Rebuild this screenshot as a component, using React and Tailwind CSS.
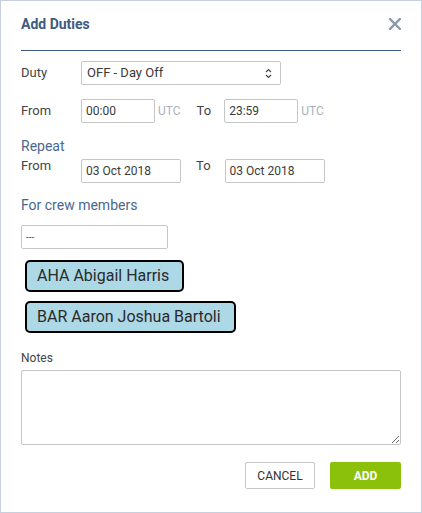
import React from 'react';

const font = { fontFamily: 'Roboto, "Noto Sans", sans-serif' };

const Label = ({ children, className = '' }) => (
  <span className={`text-[13px] text-[#444] ${className}`}>{children}</span>
);

const TextBox = ({ value, width }) => (
  <div className={`h-[24px] ${width} border border-[#c6c6c6] rounded-[2px] px-[4px] flex items-center text-[12px] text-[#3a3a3a]`}>
    {value}
  </div>
);

const Chip = ({ children }) => (
  <div className="self-start ml-[4px] h-[32px] pl-[10px] pr-[13px] flex items-center border-2 border-black rounded-[5px] bg-[#add8e6] text-[16px] text-[#2a2a2a]">
    {children}
  </div>
);

export default function App() {
  return (
    <div style={font} className="w-[422px] h-[513px] bg-white border border-[#c5d1df] px-[20px] flex flex-col">
      {/* header */}
      <div className="mt-[13px] h-[20px] flex items-center justify-between">
        <h1 className="text-[14px] font-bold text-[#3e5b80]">Add Duties</h1>
        <svg width="12" height="12" viewBox="0 0 12 12">
          <path d="M1 1L11 11M11 1L1 11" stroke="#8a99ab" strokeWidth="2.4" strokeLinecap="square" />
        </svg>
      </div>
      <div className="mt-[16px] border-t border-[#3e5b80]" />

      {/* duty */}
      <div className="mt-[10px] flex items-center">
        <Label className="w-[60px]">Duty</Label>
        <div className="h-[24px] w-[200px] border border-[#c6c6c6] rounded-[2px] pl-[5px] pr-[8px] flex items-center justify-between text-[13px] text-[#3a3a3a]">
          <span>OFF - Day Off</span>
          <svg width="7" height="11" viewBox="0 0 7 11">
            <path d="M1 4L3.5 1.5L6 4M1 7L3.5 9.5L6 7" fill="none" stroke="#444" strokeWidth="1.1" />
          </svg>
        </div>
      </div>

      {/* time */}
      <div className="mt-[14px] flex items-center">
        <Label className="w-[60px]">From</Label>
        <TextBox value="00:00" width="w-[74px]" />
        <span className="ml-[3px] text-[12px] text-[#aab0b8]">UTC</span>
        <Label className="ml-[16px]">To</Label>
        <div className="ml-[13px]">
          <TextBox value="23:59" width="w-[74px]" />
        </div>
        <span className="ml-[3px] text-[12px] text-[#aab0b8]">UTC</span>
      </div>

      {/* repeat */}
      <div className="mt-[13px] h-[20px] flex items-center text-[14px] text-[#4a6791]">Repeat</div>
      <div className="mt-[3px] flex items-center">
        <Label className="w-[60px] self-start -mt-[3px]">From</Label>
        <TextBox value="03 Oct 2018" width="w-[100px]" />
        <Label className="ml-[15px] self-start -mt-[3px]">To</Label>
        <div className="ml-[14px]">
          <TextBox value="03 Oct 2018" width="w-[100px]" />
        </div>
      </div>

      {/* crew */}
      <div className="mt-[12px] h-[20px] flex items-center text-[14px] text-[#4a6791]">For crew members</div>
      <div className="mt-[10px] h-[24px] w-[147px] border border-[#c6c6c6] rounded-[2px] px-[4px] flex items-center text-[10px] text-[#555]">
        ---
      </div>
      <div className="mt-[11px] flex flex-col gap-[9px]">
        <Chip>AHA Abigail Harris</Chip>
        <Chip>BAR Aaron Joshua Bartoli</Chip>
      </div>

      {/* notes */}
      <div className="mt-[16px] h-[18px] flex items-center text-[12px] text-[#444]">Notes</div>
      <textarea className="mt-[3px] h-[75px] w-full border border-[#c6c6c6] rounded-[2px] resize-y outline-none" />

      {/* actions */}
      <div className="mt-[17px] flex justify-end gap-[15px]">
        <button className="h-[27px] w-[70px] border border-[#c8c8c8] rounded-[2px] bg-white text-[12px] text-[#333]">
          CANCEL
        </button>
        <button className="h-[27px] w-[71px] rounded-[2px] bg-[#8bc10b] text-[12px] font-bold text-white">
          ADD
        </button>
      </div>
    </div>
  );
}
